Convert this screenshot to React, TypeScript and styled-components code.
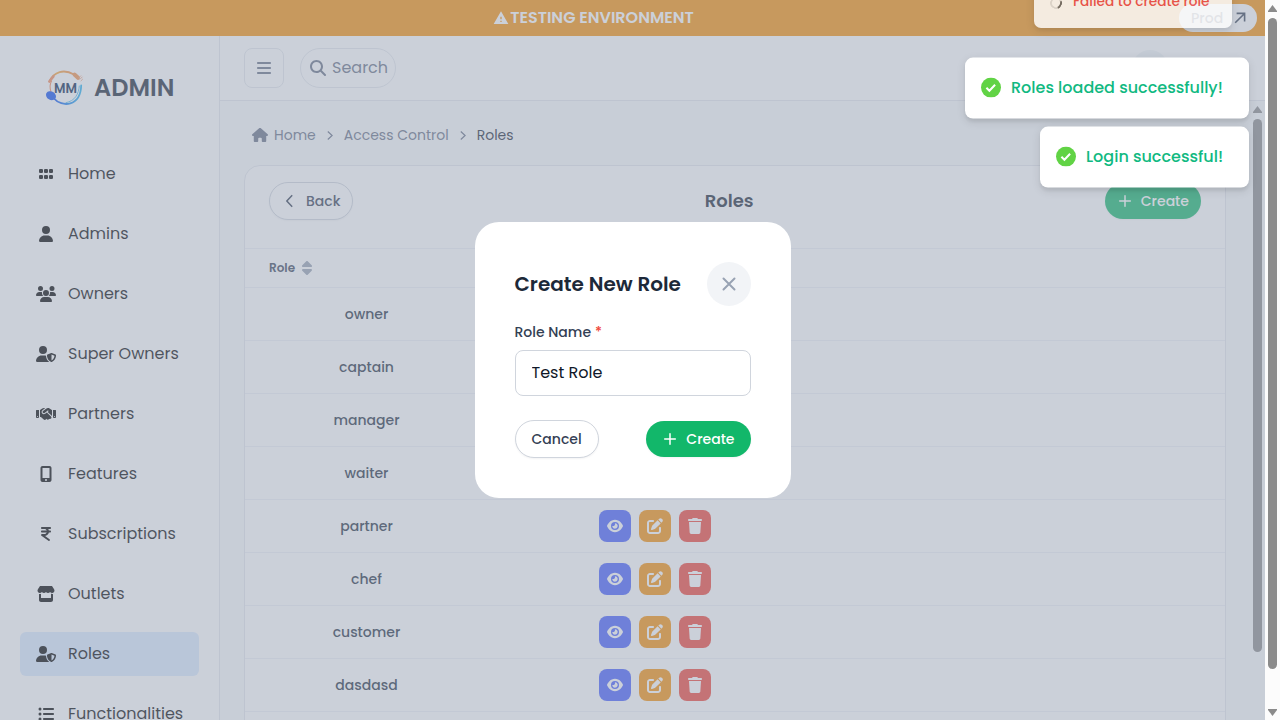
import React from 'react';
import styled, { createGlobalStyle, css } from 'styled-components';
import {
  FaBars, FaEye, FaGrip, FaHandshake, FaHouse, FaIndianRupeeSign, FaListUl, FaMagnifyingGlass,
  FaMobileScreenButton, FaPenToSquare, FaSort, FaStore, FaTrash, FaUser, FaUserShield, FaUsers,
} from 'react-icons/fa6';
import { MdWarning } from 'react-icons/md';

const gray = {
  50: '#f9fafb', 100: '#f2f4f7', 200: '#e4e7ec', 300: '#d0d5dd', 400: '#98a2b3',
  500: '#667085', 700: '#344054', 800: '#1d2939',
};

const Global = createGlobalStyle`
  *, *::before, *::after { box-sizing: border-box; }
  body { margin: 0; overflow: hidden; font-family: Poppins, Inter, "Open Sans", sans-serif; line-height: 1.5; }
  button, input { font: inherit; color: inherit; }
  svg { display: block; flex: none; }
`;

const Text = styled.span`
  white-space: nowrap;
`;

const Window = styled.div`
  display: flex;
  height: 720px;
  width: 1280px;
  overflow: hidden;
  position: relative;
`;
const Page = styled.div`
  flex: 1;
  display: flex;
  flex-direction: column;
  position: relative;
  background: ${gray[50]};
`;

/* Scrollbars */
const Rail = styled.div<{ $bg: string }>`
  width: 15px;
  height: 100%;
  display: flex;
  flex-direction: column;
  align-items: center;
  flex: none;
  padding: 5px 0 4px;
  background: ${p => p.$bg};
`;
const RailArrow = styled.svg`width: 9px; height: 7px; fill: #8b8b8b;`;
const Thumb = styled.div<{ $h: number }>`
  width: 9px;
  height: ${p => p.$h}px;
  margin-top: 6px;
  border-radius: 5px;
  background: #8b8b8b;
`;
const Spacer = styled.div`flex: 1;`;

/* Environment banner */
const Banner = styled.div`
  height: 36px;
  flex: none;
  display: flex;
  align-items: center;
  padding: 0 8px;
  background: #f79009;
  color: #fff;
`;
const BannerText = styled.div`
  flex: 1;
  display: flex;
  align-items: center;
  justify-content: center;
  gap: 1px;
  font-size: 16px;
  font-weight: 600;
  line-height: 20px;
`;
const ProdLink = styled.a`
  width: 78px;
  height: 28px;
  border-radius: 14px;
  display: flex;
  align-items: center;
  justify-content: space-between;
  padding: 0 11px 0 12px;
  background: #fff;
  color: ${gray[700]};
  font-size: 14px;
  font-weight: 500;
`;

const Body = styled.div`flex: 1; display: flex; min-height: 0;`;

/* Sidebar */
const Sidebar = styled.aside`
  width: 220px;
  flex: none;
  background: #fff;
  border-right: 1px solid ${gray[200]};
  padding: 32px 20px 0;
  overflow: hidden;
`;
const Brand = styled.div`
  display: flex;
  align-items: center;
  height: 40px;
  gap: 9px;
  padding-left: 25px;
  margin-bottom: 44px;
  color: ${gray[800]};
  font-size: 24px;
  line-height: 32px;
  font-weight: 600;
`;
const Menu = styled.nav`display: flex; flex-direction: column; gap: 16px;`;
const MenuItem = styled.a<{ $active?: boolean }>`
  height: 44px;
  flex: none;
  display: flex;
  align-items: center;
  gap: 12px;
  padding: 0 16px;
  border-radius: 6px;
  font-size: 16px;
  color: #050609;
  ${p => p.$active && css`background: #dbeafe;`}
`;
const MenuIcon = styled.span`
  color: #000;
  svg { height: 16px; width: 20px; }
`;

/* Header */
const Main = styled.div`flex: 1; display: flex; flex-direction: column; min-width: 0;`;
const Header = styled.header`
  height: 65px;
  flex: none;
  display: flex;
  align-items: center;
  gap: 16px;
  padding: 0 97px 0 24px;
  background: #fff;
  border-bottom: 1px solid ${gray[200]};
  color: ${gray[500]};
`;
const MenuToggle = styled.button`
  width: 40px;
  height: 40px;
  padding: 0;
  display: flex;
  align-items: center;
  justify-content: center;
  border: 1px solid ${gray[200]};
  border-radius: 8px;
  background: none;
`;
const SearchPill = styled.button`
  width: 96px;
  height: 40px;
  display: flex;
  align-items: center;
  gap: 6px;
  padding: 0 9px;
  border: 1px solid ${gray[200]};
  border-radius: 20px;
  background: none;
  font-size: 16px;
`;
const Avatar = styled.div`
  width: 36px;
  height: 36px;
  margin-left: auto;
  border-radius: 50%;
  background: #f1f5f6;
`;

/* Content */
const Scroll = styled.div`flex: 1; display: flex; min-height: 0;`;
const Content = styled.main`
  flex: 1;
  min-width: 0;
  padding: 24px 24px 0;
  overflow: hidden;
`;
const Breadcrumb = styled.div`
  height: 20px;
  display: flex;
  align-items: center;
  padding-left: 8px;
  margin-bottom: 20px;
  font-size: 14px;
  color: ${gray[500]};
  > svg:first-child { margin-right: 6px; }
`;
const Sep = styled.svg`width: 6px; height: 9px; margin: 1px 11px 0; fill: none; stroke: ${gray[500]};`;
const Current = styled.span`color: ${gray[800]};`;
const Card = styled.section`
  width: 982px;
  height: 640px;
  border: 1px solid ${gray[200]};
  border-radius: 16px;
  background: #fff;
  overflow: hidden;
`;
const CardHead = styled.div`
  height: 82px;
  display: flex;
  align-items: center;
  justify-content: space-between;
  padding: 0 24px 12px;
`;
const CardTitle = styled.h2`
  margin: 0;
  font-size: 18px;
  font-weight: 600;
  line-height: 28px;
  color: ${gray[800]};
`;
const OutlineButton = styled.button<{ $px: number }>`
  height: 38px;
  display: flex;
  align-items: center;
  gap: 8px;
  padding: 0 ${p => p.$px}px;
  border: 1px solid ${gray[300]};
  border-radius: 19px;
  background: #fff;
  color: ${gray[700]};
  font-size: 14px;
  font-weight: 500;
  box-shadow: 0 1px 2px rgba(16, 24, 40, 0.05);
`;
const PrimaryButton = styled.button<{ $px: number }>`
  height: 36px;
  display: flex;
  align-items: center;
  gap: 8px;
  padding: 0 ${p => p.$px}px;
  border: 0;
  border-radius: 18px;
  background: #12b76a;
  color: #fff;
  font-size: 14px;
  font-weight: 500;
  box-shadow: 0 1px 2px rgba(16, 24, 40, 0.05);
`;
const rowLine = '#eef1f6';
const HeadRow = styled.div`
  height: 40px;
  display: flex;
  align-items: center;
  gap: 7px;
  padding-left: 24px;
  border-top: 1px solid ${rowLine};
  border-bottom: 1px solid ${rowLine};
  color: #3a465a;
  font-size: 12px;
  font-weight: 600;
  svg { height: 16px; width: 10px; color: ${gray[400]}; }
`;
const Row = styled.div`
  height: 53px;
  display: grid;
  grid-template-columns: 243px 334px 1fr;
  align-items: center;
  justify-items: center;
  border-bottom: 1px solid ${rowLine};
  color: #243143;
  font-size: 14px;
  font-weight: 500;
`;
const Actions = styled.div`display: flex; gap: 8px;`;
const Action = styled.button<{ $bg: string }>`
  width: 32px;
  height: 32px;
  padding: 0;
  display: flex;
  align-items: center;
  justify-content: center;
  border: 0;
  border-radius: 8px;
  background: ${p => p.$bg};
  color: #fff;
  font-size: 16px;
`;

/* Dialog */
const Overlay = styled.div`
  position: absolute;
  inset: 0;
  display: flex;
  align-items: center;
  justify-content: center;
  background: rgba(152, 162, 179, 0.5);
`;
const Dialog = styled.div`
  width: 316px;
  height: 276px;
  padding: 40px;
  border-radius: 24px;
  background: #fff;
  display: flex;
  flex-direction: column;
`;
const DialogHead = styled.div`
  display: flex;
  align-items: center;
  justify-content: space-between;
  height: 44px;
  font-size: 20px;
  font-weight: 600;
  color: ${gray[800]};
`;
const Close = styled.button`
  width: 44px;
  height: 44px;
  padding: 0;
  display: flex;
  align-items: center;
  justify-content: center;
  border: 0;
  border-radius: 50%;
  background: ${gray[100]};
  svg { stroke: ${gray[400]}; stroke-width: 2; stroke-linecap: round; }
`;
const Label = styled.label`
  margin: 16px 0 8px;
  height: 20px;
  display: flex;
  align-items: center;
  gap: 4px;
  font-size: 14px;
  font-weight: 500;
  color: ${gray[700]};
`;
const Required = styled.span`color: #f04438;`;
const Input = styled.input`
  width: 100%;
  height: 46px;
  flex: none;
  padding: 0 16px 2px;
  border: 1px solid ${gray[300]};
  border-radius: 8px;
  outline: none;
  background: #fff;
  color: #101828;
  font-size: 16px;
`;
const Footer = styled.div`
  margin-top: 24px;
  display: flex;
  align-items: center;
  justify-content: space-between;
`;

/* Toasts */
const shadow = '0 3px 10px rgba(0,0,0,0.1), 0 3px 3px rgba(0,0,0,0.05)';
const Toasts = styled.div`
  position: absolute;
  top: 58px;
  right: 31px;
  display: flex;
  flex-direction: column;
  align-items: flex-end;
  gap: 8px;
  transform: translateY(-0.4px);
`;
const Toast = styled.div<{ $w: number }>`
  width: ${p => p.$w}px;
  height: 61px;
  display: flex;
  align-items: center;
  gap: 10px;
  padding: 0 0 1px 16px;
  border-radius: 8px;
  background: #fff;
  color: #10b981;
  font-size: 16px;
  font-weight: 500;
  box-shadow: ${shadow};
`;
const LeavingToast = styled.div`
  position: absolute;
  top: -26px;
  left: 1034px;
  width: 198px;
  height: 54px;
  display: flex;
  align-items: center;
  gap: 11px;
  padding: 3px 0 0 16px;
  border-radius: 7px;
  background: #fff;
  color: #ef4444;
  font-size: 13.7px;
  font-weight: 500;
  box-shadow: ${shadow};
  opacity: 0.81;
`;
const Spinner = styled.div`
  width: 12px;
  height: 12px;
  flex: none;
  border: 2px solid #e0e0e0;
  border-right-color: #616161;
  border-radius: 50%;
  transform: rotate(25deg);
`;

const Plus = () => (
  <svg width="16" height="16" viewBox="0 0 16 16" stroke="currentColor" strokeWidth="1.5" strokeLinecap="round">
    <path d="M8 2.7v10.6M2.7 8h10.6" />
  </svg>
);
const Check = () => (
  <svg width="20" height="20" viewBox="0 0 20 20">
    <circle cx="10" cy="10" r="10" fill="#61d345" />
    <path d="M5.4 10.2l3 3 5.7-6" fill="none" stroke="#fff" strokeWidth="2" />
  </svg>
);
const Logo = () => (
  <svg width="40" height="40" viewBox="0 0 40 40">
    <defs>
      <linearGradient id="warm" x1="0" y1="1" x2="1" y2="0">
        <stop offset="0" stopColor="#f47a4a" />
        <stop offset="0.6" stopColor="#f8a93a" />
        <stop offset="1" stopColor="#f58a4a" />
      </linearGradient>
      <linearGradient id="cool" x1="0" y1="0" x2="1" y2="0">
        <stop offset="0" stopColor="#1050f0" />
        <stop offset="1" stopColor="#28b4f0" />
      </linearGradient>
    </defs>
    <g fill="none" strokeLinecap="round">
      <path d="M4.400 13.500C9 3.500 19 .8 29 6.500" stroke="url(#warm)" strokeWidth="2" />
      <path d="M4.400 13.500L8.500 8.500" stroke="#f58a5a" strokeWidth="2.400" />
      <path d="M6.600 13C4.600 16 4.800 20 6 24" stroke="#f58a5a" strokeWidth="1.100" />
      <path d="M29.500 6.500l3.500 3.300" stroke="#f3924c" strokeWidth="4" />
      <path d="M33.800 9.800l2-2M35 11.200l2.200-2.200M36 12.800l1.600-1.600" stroke="#f3a07c" strokeWidth="0.900" />
      <path d="M8.500 30C17 40 35.500 38.500 36.200 17.500" stroke="url(#cool)" strokeWidth="1.800" />
      <path d="M21 34.700C30 33 33.700 26 34.300 18" stroke="#5cc0f0" strokeWidth="1" />
    </g>
    <ellipse cx="6" cy="27.700" rx="5.200" ry="4.200" transform="rotate(30 6 27.700)" fill="#1050f0" />
    <text x="20.600" y="25.200" textAnchor="middle" fontSize="14.500" fontWeight="600" fill="#0a2850" textLength="23" lengthAdjust="spacingAndGlyphs">MM</text>
  </svg>
);
const Chevron = () => <Sep viewBox="0 0 6 9"><path d="M.8.5l4.300 4-4.300 4" strokeWidth="1.200" /></Sep>;

const menu: [React.ReactNode, string][] = [
  [<FaGrip />, 'Home'],
  [<FaUser />, 'Admins'],
  [<FaUsers />, 'Owners'],
  [<FaUserShield />, 'Super Owners'],
  [<FaHandshake />, 'Partners'],
  [<FaMobileScreenButton />, 'Features'],
  [<FaIndianRupeeSign />, 'Subscriptions'],
  [<FaStore />, 'Outlets'],
  [<FaUserShield />, 'Roles'],
  [<FaListUl />, 'Functionalities'],
];
const roles = ['owner', 'captain', 'manager', 'waiter', 'partner', 'chef', 'customer', 'dasdasd'];

export default function App() {
  return (
    <Window>
      <Global />
      <Page>
        <Banner>
          <BannerText><MdWarning size={16} /><Text>TESTING ENVIRONMENT</Text></BannerText>
          <ProdLink>
            <Text>Prod</Text>
            <svg width="12" height="12" viewBox="0 0 12 12" fill="none" stroke="currentColor" strokeWidth="1.6">
              <path d="M1.200 10.800L10.300 1.700M2.600 1.400h8v8" />
            </svg>
          </ProdLink>
        </Banner>
        <Body>
          <Sidebar>
            <Brand><Logo /><Text>ADMIN</Text></Brand>
            <Menu>
              {menu.map(([icon, name]) => (
                <MenuItem key={name} $active={name === 'Roles'}>
                  <MenuIcon>{icon}</MenuIcon>
                  <Text>{name}</Text>
                </MenuItem>
              ))}
            </Menu>
          </Sidebar>
          <Main>
            <Header>
              <MenuToggle><FaBars size={16} /></MenuToggle>
              <SearchPill><FaMagnifyingGlass size={16} /><Text>Search</Text></SearchPill>
              <Avatar />
            </Header>
            <Scroll>
              <Content>
                <Breadcrumb>
                  <FaHouse size={16} />
                  <Text>Home</Text><Chevron />
                  <Text>Access Control</Text><Chevron />
                  <Current><Text>Roles</Text></Current>
                </Breadcrumb>
                <Card>
                  <CardHead>
                    <OutlineButton $px={12}>
                      <svg width="16" height="14" viewBox="-3 0 16 14" fill="none" stroke="currentColor" strokeWidth="1.5">
                        <path d="M7.200 1.200L1.800 7l5.400 5.800" />
                      </svg>
                      <Text>Back</Text>
                    </OutlineButton>
                    <CardTitle><Text>Roles</Text></CardTitle>
                    <PrimaryButton $px={12}><Plus /><Text>Create</Text></PrimaryButton>
                  </CardHead>
                  <HeadRow><Text>Role</Text><FaSort /></HeadRow>
                  {roles.map(name => (
                    <Row key={name}>
                      <Text>{name}</Text>
                      <Actions>
                        <Action $bg="#465fff"><FaEye /></Action>
                        <Action $bg="#f79009"><FaPenToSquare /></Action>
                        <Action $bg="#f04438"><FaTrash /></Action>
                      </Actions>
                    </Row>
                  ))}
                </Card>
              </Content>
              <Rail $bg="transparent">
                <RailArrow viewBox="0 0 9 7"><path d="M4.500 0L9 6v1H0V6z" /></RailArrow>
                <Thumb $h={533} />
              </Rail>
            </Scroll>
          </Main>
        </Body>
        <Overlay>
          <Dialog>
            <DialogHead>
              <Text>Create New Role</Text>
              <Close>
                <svg width="14" height="14" viewBox="0 0 14 14"><path d="M1.500 1.500l11 11M12.500 1.500L1.500 12.500" /></svg>
              </Close>
            </DialogHead>
            <Label><Text>Role Name</Text><Required>*</Required></Label>
            <Input defaultValue="Test Role" />
            <Footer>
              <OutlineButton $px={16}><Text>Cancel</Text></OutlineButton>
              <PrimaryButton $px={16}><Plus /><Text>Create</Text></PrimaryButton>
            </Footer>
          </Dialog>
        </Overlay>
      </Page>
      <Rail $bg="#fcfcfc">
        <RailArrow viewBox="0 0 9 7"><path d="M4.500 0L9 6v1H0V6z" /></RailArrow>
        <Thumb $h={651} />
        <Spacer />
        <RailArrow viewBox="0 0 9 7"><path d="M4.500 7L9 1V0H0v1z" /></RailArrow>
      </Rail>
      <Toasts>
        <Toast $w={284}><Check /><Text>Roles loaded successfully!</Text></Toast>
        <Toast $w={209}><Check /><Text>Login successful!</Text></Toast>
      </Toasts>
      <LeavingToast><Spinner /><Text>Failed to create role</Text></LeavingToast>
    </Window>
  );
}
